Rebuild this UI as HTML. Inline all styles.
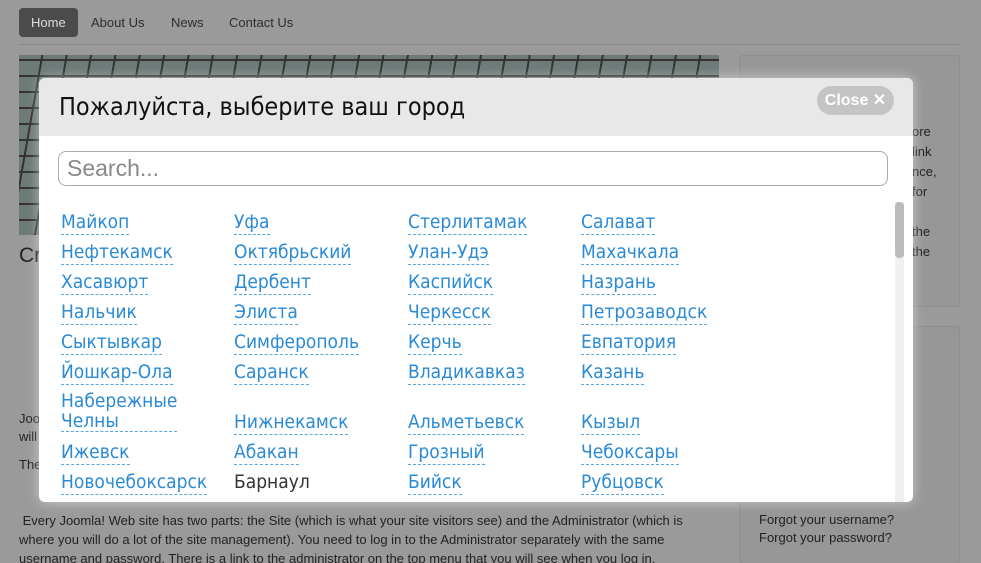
<!DOCTYPE html>
<html style="overflow:hidden;height:563px"><head><meta charset="utf-8"><style>
body{margin:0;width:981px;height:563px;overflow:hidden;background:#9a9a9a;font-family:"Liberation Sans",sans-serif;position:relative}
.nav{position:absolute;top:8px;left:19px;font-size:13px;color:#2e2e2e}
.nav span{position:absolute;top:0;white-space:nowrap;line-height:29px}
.home{background:#4b4b4b;color:#ddd;border-radius:4px;padding:0 12px;left:0}
.hr{position:absolute;top:44px;left:19px;width:940px;height:1px;background:#8a8a8a}
.img{position:absolute;left:19px;top:55px;width:700px;height:180px;background:repeating-linear-gradient(100deg,transparent 0 22px,#333 22px 24px),repeating-linear-gradient(0deg,transparent 0 14px,#333 14px 16px),#6e7a78}
.side{position:absolute;left:739px;width:219px;border:1px solid #8e8e8e;border-radius:4px;background:#979797}
.t{position:absolute;font-size:13px;color:#222;line-height:18px}
.modal{position:absolute;left:39px;top:78px;width:874px;height:424px;background:#fff;border-radius:6px;overflow:hidden;box-shadow:0 0 12px rgba(255,255,255,.5)}
.head{height:58px;background:#e8e8e8;position:relative}
.head h1{margin:0;position:absolute;left:20px;top:14px;font-weight:normal;font-size:25px;color:#111;font-family:"DejaVu Sans Condensed","Liberation Sans",sans-serif}
.close{position:absolute;right:19px;top:8px;width:77px;height:29px;border-radius:15px;background:#c4c4c4;color:#fff;font-weight:bold;font-size:16px;line-height:29px;text-align:center}
.search{position:absolute;left:19px;top:73px;height:35px;border:1px solid #aaa;border-radius:8px;font-size:23px;color:#888;line-height:33px;padding-left:8px;box-sizing:border-box;width:830px}
.c{position:absolute;font-size:19px;color:#2a8ad6;border-bottom:1px dashed #5aa5e0;line-height:23px;white-space:nowrap;font-family:"DejaVu Sans Condensed","Liberation Sans",sans-serif}
.sb{position:absolute;left:856px;top:124px;width:9px;height:300px;background:#f0f0f0}
.sb i{position:absolute;left:0;top:0;width:9px;height:56px;background:#bbb;border-radius:4px}
</style></head><body>
<div class="nav"><span class="home">Home</span><span style="left:72px">About Us</span><span style="left:152px">News</span><span style="left:210px">Contact Us</span></div>
<div class="hr"></div>
<div class="img"></div>
<div class="side" style="top:55px;height:250px"></div>
<div class="side" style="top:326px;height:236px"></div>
<div class="t" style="left:19px;top:247px;font-size:21px">Cr</div>
<div class="t" style="left:19px;top:410px">Joo<br>will</div>
<div class="t" style="left:19px;top:456px">The</div>
<div class="t" style="left:912px;top:122px;line-height:20px">ore<br>link<br>nce,<br>for<br><br>the<br>the</div>
<div class="t" style="left:19px;top:511px;line-height:19px;width:690px">&nbsp;Every Joomla! Web site has two parts: the Site (which is what your site visitors see) and the Administrator (which is where you will do a lot of the site management). You need to log in to the Administrator separately with the same username and password. There is a link to the administrator on the top menu that you will see when you log in.</div>
<div class="t" style="left:759px;top:511px;line-height:18px">Forgot your username?<br>Forgot your password?</div>
<div class="modal">
<div class="head"><h1>Пожалуйста, выберите ваш город</h1><div class="close">Close ✕</div></div>
<div class="search">Search...</div>
<div class="sb"><i></i></div>
<div class="c" style="left:22px;top:133px">Майкоп</div><div class="c" style="left:195px;top:133px">Уфа</div><div class="c" style="left:369px;top:133px">Стерлитамак</div><div class="c" style="left:542px;top:133px">Салават</div>
<div class="c" style="left:22px;top:163px">Нефтекамск</div><div class="c" style="left:195px;top:163px">Октябрьский</div><div class="c" style="left:369px;top:163px">Улан-Удэ</div><div class="c" style="left:542px;top:163px">Махачкала</div>
<div class="c" style="left:22px;top:193px">Хасавюрт</div><div class="c" style="left:195px;top:193px">Дербент</div><div class="c" style="left:369px;top:193px">Каспийск</div><div class="c" style="left:542px;top:193px">Назрань</div>
<div class="c" style="left:22px;top:223px">Нальчик</div><div class="c" style="left:195px;top:223px">Элиста</div><div class="c" style="left:369px;top:223px">Черкесск</div><div class="c" style="left:542px;top:223px">Петрозаводск</div>
<div class="c" style="left:22px;top:253px">Сыктывкар</div><div class="c" style="left:195px;top:253px">Симферополь</div><div class="c" style="left:369px;top:253px">Керчь</div><div class="c" style="left:542px;top:253px">Евпатория</div>
<div class="c" style="left:22px;top:283px">Йошкар-Ола</div><div class="c" style="left:195px;top:283px">Саранск</div><div class="c" style="left:369px;top:283px">Владикавказ</div><div class="c" style="left:542px;top:283px">Казань</div>
<div class="c" style="left:22px;top:313px;line-height:20px">Набережные<br>Челны</div>
<div class="c" style="left:195px;top:333px">Нижнекамск</div><div class="c" style="left:369px;top:333px">Альметьевск</div><div class="c" style="left:542px;top:333px">Кызыл</div>
<div class="c" style="left:22px;top:363px">Ижевск</div><div class="c" style="left:195px;top:363px">Абакан</div><div class="c" style="left:369px;top:363px">Грозный</div><div class="c" style="left:542px;top:363px">Чебоксары</div>
<div class="c" style="left:22px;top:393px">Новочебоксарск</div><div class="c" style="left:195px;top:393px;color:#333;border-color:transparent">Барнаул</div><div class="c" style="left:369px;top:393px">Бийск</div><div class="c" style="left:542px;top:393px">Рубцовск</div>
</div>
</body></html>
